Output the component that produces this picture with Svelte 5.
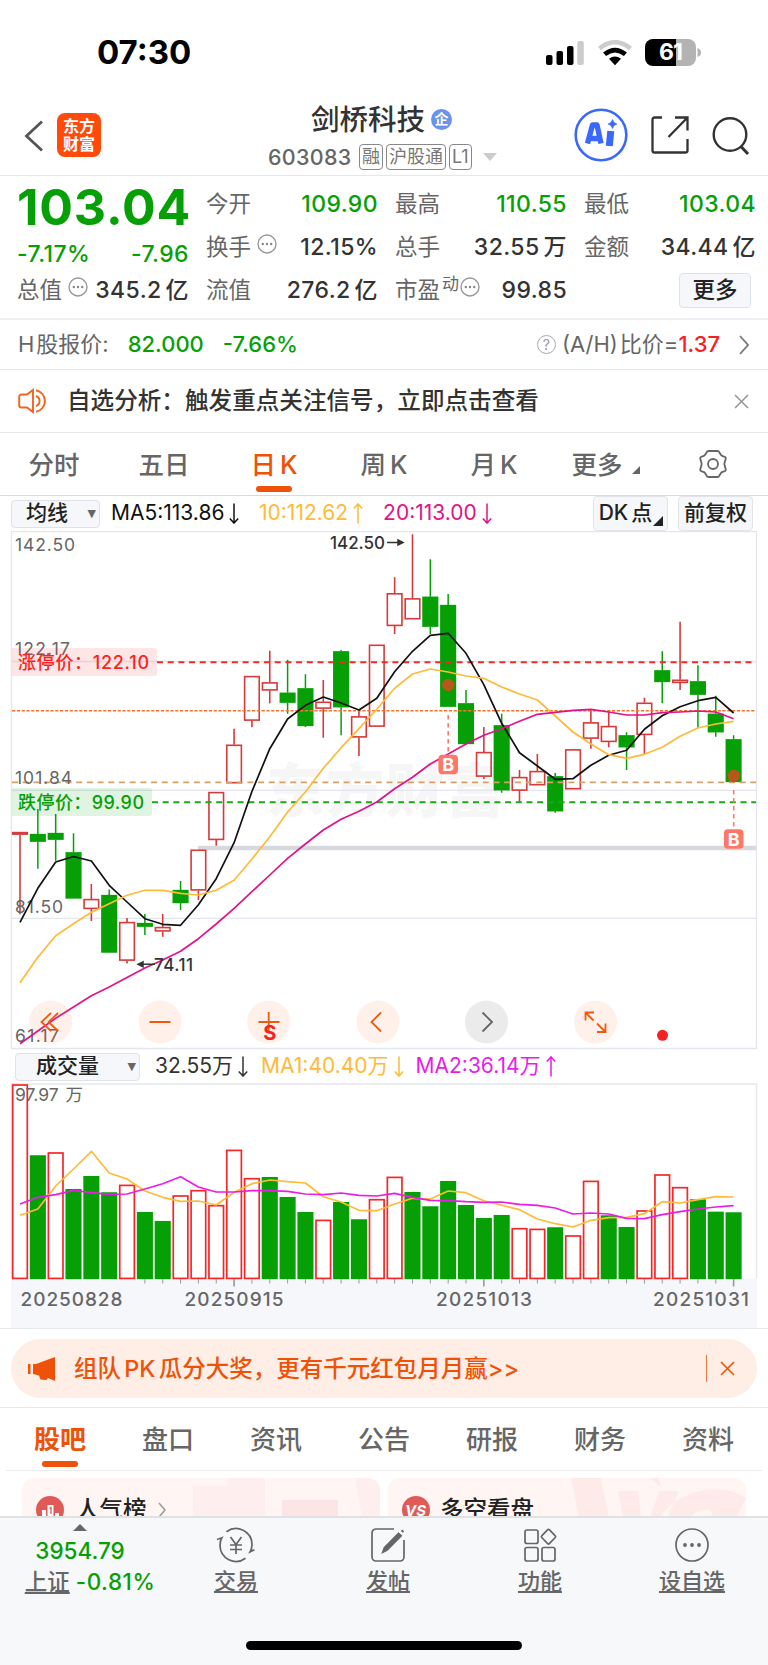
<script lang="ts">
	type Bar = [up: number, high: number, top: number, bottom: number, low: number];

	const STEP = 17.84;
	const cx = (i: number) => 20 + i * STEP;
	const line = (ys: number[]) => ys.map((y, i) => `${cx(i).toFixed(1)},${y}`).join(' ');

	// 1 = hollow red, 0 = solid green; then high, body top, body bottom, low
	const candles: Bar[] = [
		[1, 832, 832, 834.7, 914.3], [0, 809, 834, 841.7, 868.7], [0, 814, 833, 839.7, 860.7],
		[0, 833.3, 852.3, 898.5, 898.5], [1, 884, 899, 909, 921], [0, 889.5, 895, 952.6, 952.6],
		[1, 918, 922, 960.7, 963.5], [0, 914, 923, 926.7, 935], [1, 914, 927, 931.5, 936.7],
		[0, 881, 890, 903, 910], [1, 849.7, 849.7, 890.5, 900], [1, 792, 792, 840, 845.7],
		[1, 728.7, 744.7, 783.3, 783.3], [1, 676, 676, 720.7, 727.3], [1, 650.7, 682.3, 690.5, 703.3],
		[0, 659.7, 692.7, 702.7, 713.7], [0, 674.3, 688.3, 726, 727], [1, 680, 701.7, 708.7, 737.7],
		[0, 650, 651.3, 707.3, 735.3], [1, 709.3, 716.3, 737.5, 756], [1, 644.7, 644.7, 726.7, 726.7],
		[1, 577.3, 593.2, 626, 634], [1, 534.3, 598.3, 619.3, 619.3], [0, 559.3, 596.7, 626.7, 634],
		[0, 594, 605, 706.7, 706.7], [0, 690, 703.3, 744, 744], [1, 727, 752, 776.7, 779],
		[0, 713.7, 725.3, 790.3, 792.7], [1, 770, 777, 790.7, 802], [1, 754, 771, 785.3, 785.3],
		[0, 773, 776.3, 811.3, 812.7], [1, 749.3, 749.3, 789.3, 789.3], [1, 710.3, 722.3, 738.7, 748.7],
		[1, 711.7, 726, 742, 747.3], [0, 732.3, 735.3, 747.3, 770], [1, 697.7, 702.7, 735, 754.5],
		[0, 651.3, 670.3, 682, 703.3], [1, 621.7, 679.7, 683, 690], [0, 665.3, 681.3, 694.7, 727.7],
		[0, 695.7, 713.7, 732.3, 736.7], [0, 735.3, 739.3, 782, 782]
	];

	const ma5 = [922.3, 888.3, 862, 856.5, 861, 885.3, 902, 918.7, 924.3, 925.3, 904.7, 878.7, 842.7, 791.5, 748.7, 719, 705.3, 697, 703, 710, 698.3, 671.7, 651.3, 635.3, 633.3, 653.3, 684.7, 723.3, 752.7, 766, 779.3, 778.7, 765.3, 755.3, 750.3, 729.3, 715.7, 706.7, 700.7, 697.3, 713];
	const ma10 = [982.7, 957.3, 935.7, 923.7, 912.3, 903.7, 895.3, 890.3, 890.3, 893.3, 895, 890.3, 880.3, 859, 836.7, 812, 792, 768.3, 747.7, 728.7, 709.3, 688.3, 674, 669, 672, 676, 678.3, 687, 694, 700, 716, 732, 744, 754.7, 758.3, 754.3, 747.3, 736.3, 728, 724, 721.3];
	const ma20 = [1043.7, 1031, 1018.3, 1007, 995.7, 987, 977.5, 968, 960, 951.3, 938.7, 924, 908.3, 891.7, 875, 858.3, 844, 830, 819.3, 811.3, 802, 788.7, 777.3, 764, 754, 744, 735.3, 728.7, 721.3, 714.3, 712.3, 710.3, 709.3, 712, 715, 715, 712.7, 712, 711, 712, 718.7];

	const volumes: [number, number][] = [
		[1, 1084.3], [0, 1155.3], [1, 1152.3], [0, 1189], [0, 1176], [0, 1192.3], [1, 1184.7],
		[0, 1212], [0, 1221], [1, 1195.3], [1, 1190], [1, 1205], [1, 1149.7], [1, 1178],
		[0, 1177], [0, 1197], [0, 1212], [1, 1219.7], [0, 1202], [0, 1219.3], [1, 1199],
		[1, 1176.7], [0, 1192], [0, 1206.3], [0, 1181], [0, 1205], [0, 1218], [0, 1215],
		[1, 1228], [1, 1228.7], [0, 1227.3], [1, 1235.3], [1, 1180.7], [0, 1215.3], [0, 1227],
		[1, 1210.3], [1, 1174.3], [1, 1187], [0, 1199.3], [0, 1211.7], [0, 1212.3]
	];
	const vma1 = [1215.3, 1209, 1186, 1169, 1151.3, 1173, 1179, 1191, 1197.3, 1201.3, 1201, 1205, 1192.3, 1183.7, 1180, 1181.7, 1183, 1196.7, 1202, 1210.3, 1210.7, 1204, 1198.3, 1199, 1191, 1192.7, 1200.7, 1205.3, 1209.7, 1219, 1223.7, 1227, 1220.3, 1217.7, 1217.3, 1213.7, 1201.7, 1203, 1199.7, 1196.7, 1197];
	const vma2 = [1204, 1197.3, 1194.7, 1190.3, 1192.7, 1194.3, 1194, 1189, 1183.7, 1176.7, 1187, 1192, 1192, 1190.7, 1190.7, 1191.3, 1194, 1194.7, 1193, 1195.3, 1196, 1193.3, 1197.3, 1200.3, 1200.7, 1201.7, 1202.3, 1202, 1204.3, 1205.3, 1208, 1214, 1213, 1214, 1218.3, 1218.7, 1214.7, 1211.7, 1209, 1207, 1205.7];

	const priceLabels: [string, number, number][] = [
		['142.50', 550.7, 60], ['122.17', 655, 55], ['101.84', 784, 57], ['81.50', 913, 48], ['61.17', 1042, 44]
	];
	const dates: [string, number, number][] = [
		['20250828', 20.5, 102], ['20250915', 184.5, 99], ['20251013', 436, 96], ['20251031', 653, 96]
	];

	const columns = [
		[['今开', '109.90', '', 'down'], ['换手', '12.15%', '', ''], ['流值', '276.2', '亿', '']],
		[['最高', '110.55', '', 'down'], ['总手', '32.55', '万', ''], ['市盈', '99.85', '', '']],
		[['最低', '103.04', '', 'down'], ['金额', '34.44', '亿', '']]
	];
	const periods = [['分时', ''], ['五日', ''], ['日', 'K'], ['周', 'K'], ['月', 'K'], ['更多', '']];
	const sections = ['股吧', '盘口', '资讯', '公告', '研报', '财务', '资料'];
	const actions = ['交易', '发帖', '功能', '设自选'];

	let period = $state('日');
	let section = $state('股吧');
</script>

{#snippet dots()}
	<svg class="dots" width="20" height="20" viewBox="0 0 20 20">
		<circle cx="10" cy="10" r="9" fill="none" stroke="#999" stroke-width="1.4" />
		<g fill="#888"><circle cx="5.8" cy="10" r="1.2" /><circle cx="10" cy="10" r="1.2" /><circle cx="14.2" cy="10" r="1.2" /></g>
	</svg>
{/snippet}

{#snippet arrow(up: boolean)}
	<svg class="arrow" width="10" height="21" viewBox="0 0 10 21" fill="none" stroke="currentColor" stroke-width="1.5">
		{#if up}
			<path d="M5 20.5V1M.8 5.5 5 .9l4.2 4.6" />
		{:else}
			<path d="M5 .5V20M.8 15.5 5 20.1l4.2-4.6" />
		{/if}
	</svg>
{/snippet}

{#snippet cross(color: string)}
	<svg width="15" height="15" viewBox="0 0 15 15"><path d="m1 1 13 13M14 1 1 14" stroke={color} stroke-width="1.6" /></svg>
{/snippet}

<div class="screen">
	<div class="status">
		<span class="clock">07:30</span>
		<div class="signals">
			<svg width="40" height="26" viewBox="0 0 40 26">
				<rect x="1" y="15" width="6.5" height="10" rx="2" />
				<rect x="11.5" y="11" width="6.5" height="14" rx="2" />
				<rect x="22" y="6" width="6.5" height="19" rx="2" />
				<rect x="32.3" y="1" width="6.5" height="24" rx="2" fill="#ccc" />
			</svg>
			<svg width="36" height="26" viewBox="0 0 36 26" fill="none">
				<path d="M2.5 8.5Q18-4 33.5 8.5" stroke="#ccc" stroke-width="4.6" />
				<path d="M7.6 14.3Q18 5.8 28.4 14.3" stroke="#000" stroke-width="4.6" />
				<path d="M12 18.7q6-4.4 12 0l-6 6.5z" fill="#000" />
			</svg>
			<div class="battery"><span>61</span></div>
			<svg width="4" height="9" viewBox="0 0 4 9"><path d="M.5 0Q4 1 4 4.5T.5 9z" fill="#b3b3b3" /></svg>
		</div>
	</div>

	<header>
		<svg class="back" width="20" height="32" viewBox="0 0 20 32"><path d="M18 1.5 2.5 16 18 30.5" fill="none" stroke="#555" stroke-width="2.8" /></svg>
		<div class="logo"><span>东方</span><span>财富</span></div>
		<div class="title">
			<div class="name">剑桥科技<span class="badge">企</span></div>
			<div class="code">
				<span class="num">603083</span><span class="tag">融</span><span class="tag">沪股通</span><span class="tag">L1</span>
				<svg width="14" height="8" viewBox="0 0 14 8"><path d="M0 0h14L7 8z" fill="#ccc" /></svg>
			</div>
		</div>
		<div class="tools">
			<svg width="54" height="54" viewBox="0 0 54 54">
				<circle cx="27" cy="27" r="25.3" fill="#fff" stroke="#3a68fa" stroke-width="2.6" />
				<path d="m13.5 35.5 5-18.500H23L27 35.500M16 30.500h10" fill="none" stroke="#3a68fa" stroke-width="5.4" stroke-linejoin="round" />
				<path d="m36.800 23-1.500 15" stroke="#3a68fa" stroke-width="7" />
				<path d="m38.500 11.500 1.500 2.900 2.900 1.600-2.900 1.600-1.500 2.900-1.500-2.900-2.900-1.600 2.900-1.600z" fill="#3a68fa" stroke="#3a68fa" stroke-width=".6" />
			</svg>
			<svg width="38" height="38" viewBox="0 0 38 38" fill="none" stroke="#333" stroke-width="2.3">
				<path d="M11 1.5H3.5a2 2 0 0 0-2 2v31a2 2 0 0 0 2 2h31a2 2 0 0 0 2-2V23M24 1.5h12.5v13M36.5 1.5l-19 19.5" />
			</svg>
			<svg width="38" height="40" viewBox="0 0 38 40" fill="none" stroke="#333" stroke-width="2.4">
				<circle cx="18" cy="18.5" r="16.3" /><path d="m29 30.5 7 7.5" stroke-width="3" />
			</svg>
		</div>
	</header>

	<section class="quote">
		<div class="col">
			<div class="price">103.04</div>
			<div class="change"><span>-7.17%</span><span>-7.96</span></div>
			<div class="cell"><span class="label">总值{@render dots()}</span><b>345.2<s>亿</s></b></div>
		</div>
		{#each columns as col, c}
			<div class="col">
				{#each col as [label, value, unit, tone]}
					<div class="cell">
						<span class="label">{label}{#if label === '市盈'}<sup>动</sup>{/if}{#if label === '换手' || label === '市盈'}{@render dots()}{/if}</span>
						<b class={tone}>{value}{#if unit}<s>{unit}</s>{/if}</b>
					</div>
				{/each}
				{#if c === 2}<div class="cell end"><button class="more">更多</button></div>{/if}
			</div>
		{/each}
	</section>

	<section class="hshare">
		<span class="gray">H<s>股报价:</s></span>
		<span class="down h1">82.000</span>
		<span class="down">-7.66%</span>
		<div class="ratio">
			<span class="help">?</span>
			<span class="gray">(A/H)<s>比价=</s></span><span class="up">1.37</span>
			<svg width="12" height="20" viewBox="0 0 12 20"><path d="m2 1 8 9-8 9" fill="none" stroke="#777" stroke-width="1.8" /></svg>
		</div>
	</section>

	<section class="notice">
		<svg width="31" height="26" viewBox="0 0 31 26" fill="none" stroke="#f4631e" stroke-width="1.9">
			<path d="M15 2v22l-6-4.5H3.5a2.3 2.3 0 0 1-2.3-2.3V8.8a2.3 2.3 0 0 1 2.3-2.3H9L15 2zM18 8a5.3 5.3 0 0 1 0 10M18 2.2a11 11 0 0 1 0 21.600" />
		</svg>
		<p>自选分析：触发重点关注信号，立即点击查看</p>
		{@render cross('#999')}
	</section>

	<nav class="periods">
		{#each periods as [name, k]}
			<button class:active={period === name} onclick={() => (period = name)}>
				{name}{#if k}<s>{k}</s>{/if}{#if name === '更多'}<i></i>{/if}
			</button>
		{/each}
		<svg width="30" height="30" viewBox="0 0 30 30" fill="none" stroke="#666" stroke-width="1.8">
			<path d="M10.5 2h9q1.200 0 1.800 1.200l1.500 2.600q.6 1 1.800 1.200l2.200.8q1 .5 1 1.800l-1.200 3.800q-.4 1.600 0 3.200l1.200 3.800q0 1.300-1 1.800l-2.200.8q-1.200.2-1.800 1.200l-1.500 2.600Q20.700 28 19.500 28h-9q-1.200 0-1.800-1.200l-1.500-2.600q-.6-1-1.800-1.200l-2.200-.8q-1-.5-1-1.800l1.200-3.800q.4-1.600 0-3.200L2.200 9.600q0-1.300 1-1.800L5.400 7q1.200-.2 1.800-1.200l1.500-2.600Q9.300 2 10.500 2z" />
			<circle cx="15" cy="15" r="5" />
		</svg>
	</nav>

	<div class="legend">
		<span class="select">均线<em>▼</em></span>
		<span class="m5">MA5:113.86{@render arrow(false)}</span>
		<span class="m10">10:112.62{@render arrow(true)}</span>
		<span class="m20">20:113.00{@render arrow(false)}</span>
		<span class="chip dk">DK<s>点</s><i></i></span>
		<span class="chip">前复权</span>
	</div>

	<svg class="chart" width="768" height="519" viewBox="0 531 768 519">
		<text class="mark" x="266" y="812" textLength="238">东方财富</text>
		<g stroke="#e4e6ee" stroke-width="1.3">
			<path d="M11.5 531.5h745v517h-745z" fill="none" />
			<path d="M12 661.500h744M12 790.300h744M12 918.300h744" />
		</g>
		<path d="M198 848h558" stroke="#d7d9df" stroke-width="4.5" />

		{#each candles as [up, high, top, bottom, low], i}
			<g class={up ? 'red' : 'green'}>
				<path d="M{cx(i)} {high}V{top}M{cx(i)} {bottom}V{low}" />
				<rect x={cx(i) - 7.3} y={top + 0.6} width="14.6" height={Math.max(bottom - top - 1.2, 1)} />
			</g>
		{/each}

		<path d="M157 662.3H756" stroke="#f22a2a" stroke-width="2" stroke-dasharray="6 4.7" />
		<path d="M12 710.7H756" stroke="#f5722c" stroke-width="1.5" stroke-dasharray="3.2 1.6" />
		<path d="M12 782.3H756" stroke="#d6a068" stroke-width="1.7" stroke-dasharray="6 4.7" />
		<path d="M152 802.2H756" stroke="#18a818" stroke-width="2" stroke-dasharray="6 4.7" />

		<g class="axis">
			{#each priceLabels as [text, y, w]}
				<text x="15" {y} textLength={w}>{text}</text>
			{/each}
		</g>
		<path d="M12 648H154q3 0 3 3v22q0 3-3 3H12z" fill="#ff3030" fill-opacity=".12" />
		<path d="M12 788H149q3 0 3 3v22q0 3-3 3H12z" fill="#0aa50a" fill-opacity=".12" />
		<text class="limit" x="18" y="669" fill="#ff1f1f" textLength="131">涨停价：122.10</text>
		<text class="limit" x="18" y="809" fill="#06a006" textLength="126">跌停价：99.90</text>

		<g fill="none" stroke-width="1.7" stroke-linejoin="round">
			<polyline points={line(ma5)} stroke="#111" />
			<polyline points={line(ma10)} stroke="#ffba38" />
			<polyline points={line(ma20)} stroke="#e0138a" />
		</g>

		<g class="extreme">
			<text x="330" y="549" textLength="55">142.50</text>
			<path d="M387 542.5h14M398 540l5 2.5-5 2.5z" />
			<text x="154" y="971" textLength="39">74.11</text>
			<path d="M155 964.3h-14M143 961.8l-5 2.5 5 2.5z" />
		</g>

		{#each [[448.2, 685, 715, 764.5], [733.7, 776, 790, 839]] as [x, dot, from, b]}
			<circle cx={x} cy={dot} r="6.2" fill="#b5581a" />
			<path d="M{x} {from}V{b - 9}" stroke="#ff7a6a" stroke-width="1.6" stroke-dasharray="4.5 3.5" />
			<rect x={x - 9.8} y={b - 9.8} width="19.6" height="19.6" rx="4" fill="#ff7867" />
			<text class="buy" {x} y={b + 6.5}>B</text>
		{/each}

		{#each [50.7, 160, 268.7, 378, 486.5, 595.5] as x, i}
			<circle cx={x} cy="1022" r="21.5" fill={i === 4 ? '#888' : '#ff5a10'} fill-opacity={i === 4 ? 0.17 : 0.09} />
		{/each}
		<g fill="none" stroke="#ee5a10" stroke-width="1.8">
			<path d="m51 1013-9.5 9 9.5 9M58 1013l-9.5 9 9.5 9" />
			<path d="M149.5 1022h21M258.5 1022h21M268.7 1012v20" />
			<path d="m381 1012.500-9.500 9.500 9.500 9.500" />
			<path d="M585.500 1020.500v-8h8.500M585.500 1012.500l8 8M605.500 1023.500v8.500H597M605.500 1032l-8.500-8.500" />
			<path d="m482.500 1012.500 9.500 9.500-9.500 9.500" stroke="#666" />
		</g>
		<text class="sell" x="269.7" y="1040">S</text>
		<circle cx="662.5" cy="1035.3" r="5.5" fill="#f42222" />
	</svg>

	<div class="legend vol">
		<span class="select">成交量<em>▼</em></span>
		<span class="v0">32.55万{@render arrow(false)}</span>
		<span class="m10">MA1:40.40万{@render arrow(false)}</span>
		<span class="v2">MA2:36.14万{@render arrow(true)}</span>
	</div>

	<svg class="chart" width="768" height="245" viewBox="0 1083 768 245">
		<path d="M11.5 1278.500V1084h745v194.500" fill="none" stroke="#e6e7ec" stroke-width="1.4" />
		<path d="M11 1278.500h746V1328H11z" fill="#f6f7fa" />
		<g class="axis"><text x="15" y="1101.3">97.97</text><text x="65.5" y="1101.3">万</text></g>
		{#each volumes as [up, top], i}
			<rect class={up ? 'vred' : 'green'} x={cx(i) - 7.3} y={top + 0.7} width="14.6" height={1277.7 - top} />
			{#if i > 6}
				<path d="M{cx(i)} 1279v{i % 14 === 12 ? 7.5 : 4.5}" stroke="#999" stroke-width={i % 14 === 12 ? 1.6 : 1} />
			{/if}
		{/each}
		<g fill="none" stroke-width="1.7" stroke-linejoin="round">
			<polyline points={line(vma1)} stroke="#ffba38" />
			<polyline points={line(vma2)} stroke="#e81de8" />
		</g>
		<g class="date">
			{#each dates as [text, x, w]}
				<text {x} y="1306" textLength={w}>{text}</text>
			{/each}
		</g>
	</svg>

	<div class="promo">
		<div class="pill">
			<svg width="28" height="24" viewBox="0 0 28 24" fill="#ee5208">
				<path d="M0 7h2.500v10H0zM5 7h3L27 0v24l-7-3-1.500 2-6-.5L11 18.500 5 17z" />
			</svg>
			<p>组队 PK 瓜分大奖，更有千元红包月月赢&gt;&gt;</p>
			<span class="bar"></span>
			{@render cross('#ee5208')}
		</div>
	</div>

	<nav class="sections">
		{#each sections as name}
			<button class:active={section === name} onclick={() => (section = name)}>{name}</button>
		{/each}
	</nav>

	<div class="cards">
		<div class="card">
			<svg class="deco" width="358" height="40" viewBox="0 0 358 40" fill="#f9d5d5" fill-opacity=".3">
				<path d="M171 8h34V0h38v40h-72zM333 0h25v40h-18z" fill-opacity=".18" />
				<path d="M260 22h56v18h-56z" fill-opacity=".5" />
			</svg>
			<svg width="28" height="28" viewBox="0 0 28 28">
				<circle cx="14" cy="14" r="14" fill="#e05a58" />
				<path d="M6 14h4v9H6zM11.500 9h6v14h-6zM19 17h4v6h-4z" fill="#fff" />
				<path d="M13.500 12.500l1.500-1V18" stroke="#e05a58" fill="none" stroke-width="1.3" />
			</svg>
			<span>人气榜</span>
			<svg width="9" height="16" viewBox="0 0 9 16"><path d="m1 1 6 7-6 7" fill="none" stroke="#999" stroke-width="1.5" /></svg>
		</div>
		<div class="card">
			<svg class="deco" width="358" height="40" viewBox="0 0 358 40" fill="#f9d5d5" fill-opacity=".35">
				<path d="M183 0h30l8 40h-30zM230 13h20l3 27h-18zM262 40l9-27h20l-12 27zM262 0h8l4 10zM358 20Q340 8 312 13q-30 8-40 27h30q8-10 20-8l4 8h22z" />
			</svg>
			<svg width="28" height="28" viewBox="0 0 28 28">
				<circle cx="14" cy="14" r="14" fill="#e05a58" />
				<text x="13.5" y="20" class="vs">VS</text>
			</svg>
			<span>多空看盘</span>
		</div>
	</div>

	<footer>
		<div class="index">
			<svg width="14" height="7" viewBox="0 0 14 7"><path d="M0 7h14L7 0z" fill="#666" /></svg>
			<span class="down">3954.79</span>
			<div><u>上证</u><span class="down">-0.81%</span></div>
		</div>
		{#each actions as name, i}
			<div class="action">
				<svg width="40" height="36" viewBox="0 0 40 36" fill="none" stroke="#666" stroke-width="1.7">
					{#if i === 0}
						<path d="M10.5 4.800A16 16 0 0 1 36 17.500c0 3-.5 5-1.800 7.200l4.300-2M29.500 31.200A16 16 0 0 1 4 18.500c0-3 .5-5.500 1.800-7.700L1 12.500" />
						<path d="m14.500 10 5.500 7.500 5.500-7.500M20 17.500V27M14 18h12M14 22.500h12" />
					{:else if i === 1}
						<path d="M26 2H8a4 4 0 0 0-4 4v24a4 4 0 0 0 4 4h24a4 4 0 0 0 4-4V13" />
						<path d="m30.500 6.500 2.500 2.200L19 23l-4 2 1.500-4.300zM33.500 3.200l2 1.800" fill="#666" stroke-width="2" />
					{:else if i === 2}
						<rect x="5" y="3" width="13" height="13.5" rx="2" /><rect x="5" y="20.5" width="13" height="13.5" rx="2" />
						<rect x="22" y="20.5" width="13" height="13.5" rx="2" />
						<path d="m27.700 2.700q.8-.8 1.600 0l6 6.200q.8.8 0 1.600l-6 6.200q-.8.8-1.600 0l-6-6.200q-.8-.8 0-1.600z" />
					{:else}
						<circle cx="20" cy="18" r="16" />
						<g fill="#666" stroke="none"><circle cx="13" cy="18" r="1.9" /><circle cx="20" cy="18" r="1.9" /><circle cx="27" cy="18" r="1.9" /></g>
					{/if}
				</svg>
				<u>{name}</u>
			</div>
		{/each}
		<div class="home"></div>
	</footer>
</div>

<style>
	:global(body) {
		margin: 0;
		background: #fff;
	}
	.screen {
		width: 768px;
		height: 1665px;
		overflow: hidden;
		display: flex;
		flex-direction: column;
		font-family: Inter, 'Noto Sans CJK SC', sans-serif;
		line-height: 1.25;
		color: #333;
	}
	.screen > * {
		flex-shrink: 0;
		box-sizing: border-box;
	}
	svg {
		display: block;
		flex-shrink: 0;
	}
	button {
		font: inherit;
		color: inherit;
		background: none;
		border: 0;
		padding: 0;
	}
	p {
		margin: 0;
		white-space: nowrap;
	}
	/* small gap between latin and chinese glyphs */
	s {
		text-decoration: none;
		margin-left: 4px;
	}
	.down {
		color: #06a006;
	}
	.up {
		color: #f91f1f;
	}
	.gray {
		color: #666;
	}

	.status {
		height: 95px;
		padding: 10px 67px 0 97px;
		display: flex;
		align-items: center;
		justify-content: space-between;
	}
	.clock {
		font-size: 33px;
		font-weight: 700;
		color: #000;
		letter-spacing: 0;
	}
	.signals {
		display: flex;
		align-items: center;
		height: 27px;
	}
	.signals svg + svg {
		margin-left: 12px;
	}
	.battery {
		margin-left: 12px;
		width: 51px;
		height: 27px;
		border-radius: 8px;
		background: linear-gradient(90deg, #000 61%, #b3b3b3 61%);
		color: #fff;
		font-size: 23px;
		font-weight: 700;
		line-height: 27px;
		text-align: center;
		letter-spacing: -1px;
	}
	.signals .battery + svg {
		margin-left: 1px;
	}

	header {
		height: 81px;
		border-bottom: 1.5px solid #e6e6ea;
		display: flex;
		padding-left: 24px;
	}
	.back {
		margin-top: 25px;
	}
	.logo {
		margin: 18px 0 0 13px;
		width: 44px;
		height: 44px;
		border-radius: 8px;
		background: #ff4a0a;
		color: #fff;
		font-size: 16px;
		font-weight: 700;
		line-height: 18px;
		display: flex;
		flex-direction: column;
		align-items: center;
		justify-content: center;
	}
	.title {
		margin-left: 167px;
		width: 250px;
		display: flex;
		flex-direction: column;
	}
	.name {
		padding-left: 43px;
		margin-top: 5px;
		height: 40px;
		display: flex;
		align-items: center;
		font-size: 28.5px;
		font-weight: 500;
	}
	.badge {
		margin-left: 6px;
		width: 21px;
		height: 21px;
		border-radius: 50%;
		background: #6a93ea;
		color: #fff;
		font-size: 14px;
		font-weight: 700;
		line-height: 20px;
		text-align: center;
	}
	.code {
		height: 36px;
		display: flex;
		align-items: center;
		gap: 3px;
		color: #666;
	}
	.code .num {
		font-size: 21.5px;
		font-weight: 500;
		width: 88px;
		letter-spacing: 0.3px;
	}
	.tag {
		border: 1.3px solid #888;
		border-radius: 4px;
		font-size: 18px;
		line-height: 24px;
		padding: 0 2px;
		color: #777;
	}
	.code svg {
		margin-left: 8px;
	}
	.tools {
		display: flex;
		padding-top: 13px;
		margin-left: 56px;
	}
	.tools svg + svg {
		margin: 8px 0 0 23px;
	}

	.quote {
		height: 144px;
		border-bottom: 2px solid #f0f0f3;
		padding: 7px 12px 0 17px;
		display: grid;
		grid-template-columns: repeat(4, 172px);
		column-gap: 17px;
		font-size: 22.5px;
	}
	.col {
		display: flex;
		flex-direction: column;
	}
	.price {
		height: 49px;
		line-height: 49px;
		font-size: 50px;
		font-weight: 700;
		color: #06a006;
		letter-spacing: 0.8px;
	}
	.change {
		display: flex;
		justify-content: space-between;
		align-items: center;
		height: 37px;
		padding-top: 7px;
		box-sizing: border-box;
		color: #06a006;
		font-weight: 500;
		font-size: 23px;
		letter-spacing: 0.4px;
	}
	.cell {
		height: 43px;
		display: flex;
		justify-content: space-between;
		align-items: center;
		white-space: nowrap;
	}
	.cell b {
		font-size: 23px;
		font-weight: 500;
		letter-spacing: 0.4px;
	}
	.label {
		color: #666;
		display: flex;
		align-items: center;
	}
	.label sup {
		font-size: 17px;
		line-height: 17px;
		margin: -12px 0 0 2px;
	}
	.dots {
		margin: -8px 0 0 6px;
	}
	sup + :global(.dots) {
		margin-left: 1px;
	}
	.end {
		justify-content: flex-end;
		padding-right: 5px;
	}
	.more {
		width: 72px;
		height: 35px;
		border: 1.5px solid #dfe2e8;
		border-radius: 4px;
		background: #f6f7fa;
		font-weight: 500;
		color: #222;
	}

	.hshare {
		height: 50px;
		border-bottom: 1.5px solid #e6e6ea;
		padding: 0 18px;
		display: flex;
		align-items: center;
		font-size: 22px;
		font-weight: 500;
	}
	.hshare .gray {
		font-weight: 400;
	}
	.hshare s {
		margin-left: 2px;
	}
	.h1 {
		margin: 0 19px;
	}
	.ratio {
		margin-left: auto;
		display: flex;
		align-items: center;
	}
	.ratio svg {
		margin-left: 18px;
	}
	.help {
		width: 17px;
		height: 17px;
		border: 1.3px solid #aaa;
		border-radius: 50%;
		font-size: 14px;
		line-height: 17px;
		font-weight: 400;
		text-align: center;
		color: #999;
		margin-right: 6px;
	}

	.notice {
		height: 63px;
		border-bottom: 1.5px solid #e6e6ea;
		padding: 0 19px 0 18px;
		display: flex;
		align-items: center;
		gap: 18px;
		font-size: 23.6px;
		font-weight: 500;
	}
	.notice p {
		flex: 1;
	}

	.periods {
		height: 63px;
		border-bottom: 1.5px solid #d9dae2;
		display: flex;
		align-items: center;
		margin-left: -1px;
		font-size: 25.5px;
		color: #666;
	}
	.periods button {
		width: 110px;
		font-weight: 500;
		position: relative;
		line-height: 61px;
		white-space: nowrap;
	}
	.periods svg {
		margin-left: 39px;
	}
	.periods i {
		display: inline-block;
		margin: 0 -3px 0 9px;
		border-left: 8px solid transparent;
		border-bottom: 8px solid #666;
	}
	button.active {
		color: #ee5208;
	}
	button.active::after {
		content: '';
		position: absolute;
		left: 50%;
		bottom: 3px;
		width: 36px;
		height: 6px;
		margin-left: -18px;
		border-radius: 3px;
		background: #ee5208;
	}

	.legend {
		height: 35px;
		padding-left: 11px;
		display: flex;
		align-items: center;
		font-size: 21px;
		white-space: nowrap;
	}
	.legend > span {
		display: flex;
		align-items: center;
		box-sizing: border-box;
	}
	.arrow {
		margin-left: 5px;
	}
	.select {
		width: 89px;
		height: 28px;
		border: 1.5px solid #dfe2e8;
		border-radius: 4px;
		background: #f6f7fa;
		padding: 0 3px 0 14px;
		justify-content: space-between;
		color: #222;
		font-weight: 500;
	}
	.select em {
		font: 11px 'DejaVu Sans', sans-serif;
		color: #666;
	}
	.m5 {
		width: 159px;
		padding-left: 11px;
		color: #111;
	}
	.m10 {
		color: #ffba38;
	}
	.m20 {
		color: #e0138a;
		margin-left: 20px;
	}
	.chip {
		width: 75px;
		height: 35px;
		border: 1.5px solid #e2e4ea;
		border-radius: 4px;
		background: #f6f7fa;
		justify-content: center;
		font-weight: 500;
		color: #222;
		position: relative;
	}
	.dk {
		margin-left: auto;
		margin-right: 10px;
		padding-right: 10px;
	}
	.dk s {
		margin-left: 3px;
	}
	.dk i {
		position: absolute;
		right: 4px;
		bottom: 4px;
		border-left: 10px solid transparent;
		border-bottom: 10px solid #222;
	}
	.chip:last-child {
		margin-right: 15px;
	}
	.vol {
		height: 33px;
		padding: 0 0 0 15px;
	}
	.vol .select {
		width: 125px;
		padding-left: 20px;
	}
	.v0 {
		padding-left: 15px;
		margin-right: 13px;
	}
	.v2 {
		color: #e81de8;
		margin-left: 12px;
	}

	.mark {
		font-size: 58px;
		font-weight: 900;
		fill: #f6f6f7;
	}
	.red {
		fill: none;
		stroke: #d63a3a;
		stroke-width: 1.6;
	}
	.vred {
		fill: none;
		stroke: #f42828;
		stroke-width: 1.7;
	}
	.green {
		fill: #06a006;
		stroke: #06a006;
		stroke-width: 1.5;
	}
	.axis {
		font-size: 17.5px;
		fill: #666;
	}
	.limit {
		font-size: 18px;
		font-weight: 500;
	}
	.extreme {
		font-size: 17px;
		font-weight: 500;
		fill: #333;
	}
	.extreme path {
		stroke: #333;
		stroke-width: 1.5;
	}
	.buy {
		fill: #fff;
		font-size: 18px;
		font-weight: 700;
		text-anchor: middle;
	}
	.sell {
		fill: #f42222;
		font-size: 20px;
		font-weight: 700;
		text-anchor: middle;
	}
	.date {
		font-size: 19px;
		font-weight: 500;
		fill: #666;
	}

	.promo {
		height: 80px;
		border-top: 1.5px solid #e8e9ed;
		border-bottom: 1.5px solid #e8e9ed;
		padding: 10px 11px 0;
	}
	.pill {
		height: 59px;
		border-radius: 30px;
		background: #feeee6;
		display: flex;
		align-items: center;
		padding: 0 22px 0 17px;
		color: #ee5208;
		font-size: 23.5px;
		font-weight: 500;
	}
	.pill p {
		flex: 1;
		margin-left: 18px;
		word-spacing: -3px;
	}
	.bar {
		width: 1.5px;
		height: 27px;
		background: #ee7a40;
		margin-right: 13px;
	}

	.sections {
		height: 63px;
		margin: 0 6px;
		border-bottom: 1.5px solid #ececef;
		display: flex;
		font-size: 26px;
		color: #666;
	}
	.sections button {
		flex: 1;
		position: relative;
		font-weight: 500;
		padding-top: 2px;
	}
	.sections button.active {
		font-weight: 700;
	}

	.cards {
		height: 45px;
		padding: 7px 22px 0;
		display: flex;
		gap: 8px;
		overflow: hidden;
	}
	.card {
		flex: 1;
		height: 90px;
		border-radius: 12px;
		background: #fff6f4;
		display: flex;
		align-items: flex-start;
		padding: 18px 0 0 14px;
		box-sizing: border-box;
		position: relative;
		overflow: hidden;
		font-size: 23.5px;
		font-weight: 500;
		line-height: 30px;
		color: #222;
	}
	.deco {
		position: absolute;
		left: 0;
		top: 0;
	}
	.card span {
		margin: -1px 11px 0 12px;
	}
	.card span + svg {
		margin-top: 6px;
	}
	.card span:last-child {
		margin-left: 10px;
	}
	.vs {
		fill: #fff;
		font-size: 15px;
		font-weight: 700;
		font-style: italic;
		text-anchor: middle;
	}

	footer {
		height: 149px;
		background: #f6f8fa;
		border-top: 2px solid #dfe1e5;
		display: flex;
		position: relative;
		font-size: 22.5px;
	}
	.index {
		width: 160px;
		display: flex;
		flex-direction: column;
		align-items: center;
		padding-top: 6px;
		box-sizing: border-box;
		font-weight: 500;
	}
	.index > span {
		line-height: 30px;
		margin-top: 5px;
	}
	.index div {
		display: flex;
		align-items: center;
		gap: 6px;
		padding-left: 20px;
		line-height: 32px;
	}
	.index div span {
		letter-spacing: 0.5px;
	}
	u {
		color: #666;
		text-underline-offset: 2px;
		text-decoration-thickness: 1.5px;
	}
	.action {
		width: 152px;
		display: flex;
		flex-direction: column;
		align-items: center;
		padding-top: 9px;
		box-sizing: border-box;
	}
	.action u {
		margin-top: 2px;
		line-height: 32px;
		font-size: 22px;
		font-weight: 500;
	}
	.home {
		position: absolute;
		left: 246px;
		bottom: 15px;
		width: 276px;
		height: 9px;
		border-radius: 5px;
		background: #000;
	}
</style>
